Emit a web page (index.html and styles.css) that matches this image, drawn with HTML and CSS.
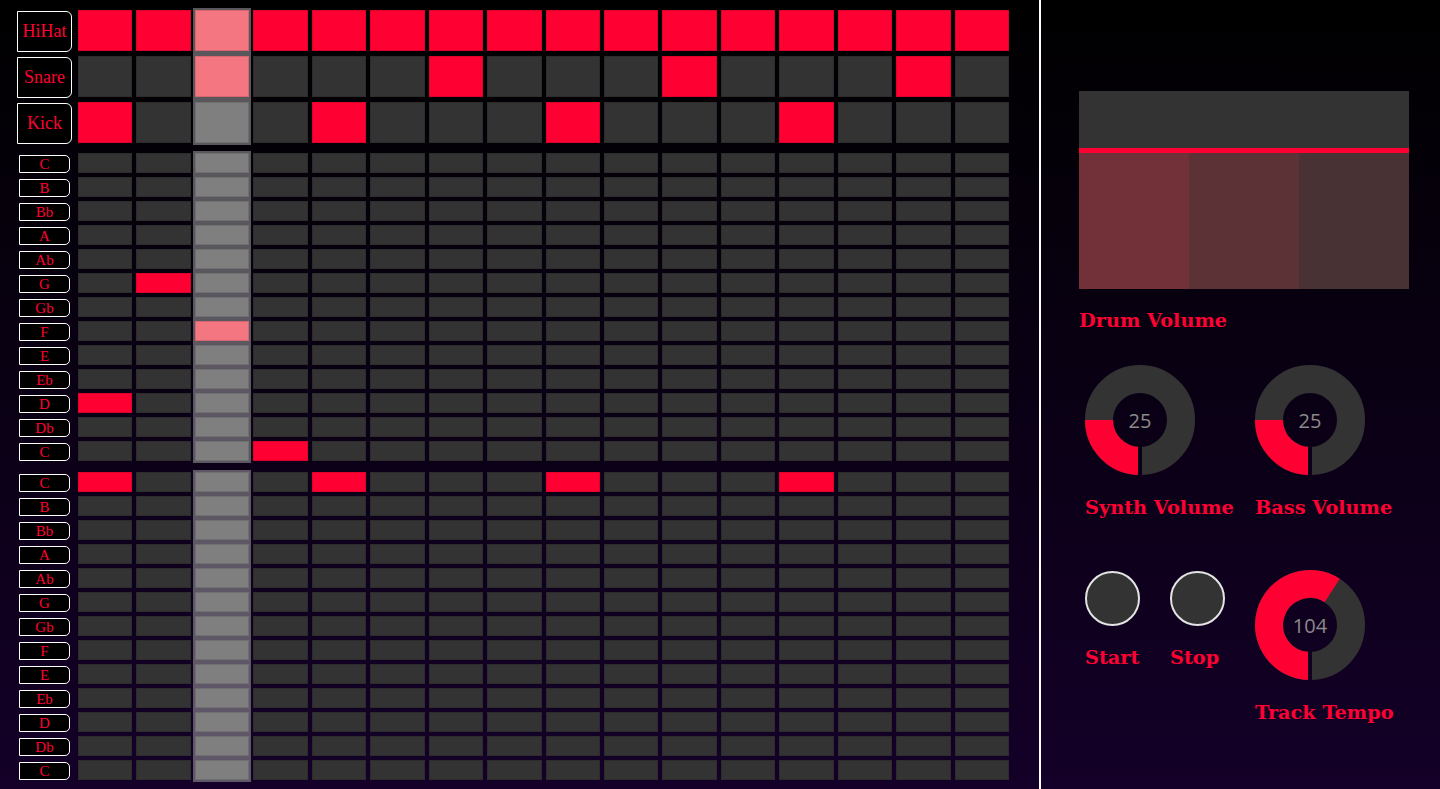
FILE: index.html
```html
<!DOCTYPE html>
<html lang="en">
<head>
<meta charset="utf-8">
<title>Step Sequencer</title>
<link rel="stylesheet" href="styles.css">
</head>
<body>
<div class="app">
  <main class="sequencer">
    <section class="section drums">
      <div class="labels" id="drum-labels"></div>
      <div class="steps" id="drum-steps"></div>
    </section>
    <section class="section notes">
      <div class="labels" id="synth-labels"></div>
      <div class="steps" id="synth-steps"></div>
    </section>
    <section class="section notes bass">
      <div class="labels" id="bass-labels"></div>
      <div class="steps" id="bass-steps"></div>
    </section>
  </main>
  <aside class="panel">
    <div class="fader">
      <div class="fader-top"></div>
      <div class="fader-line"></div>
      <div class="fader-bars">
        <div class="bar bar1"></div>
        <div class="bar bar2"></div>
        <div class="bar bar3"></div>
      </div>
    </div>
    <div class="title drum-title">Drum Volume</div>
    <div class="controls">
      <div class="control span2">
        <svg class="knob" viewBox="0 0 110 110" width="110" height="110">
          <defs>
            <mask id="gap1" maskUnits="userSpaceOnUse" x="0" y="0" width="110" height="110"><rect width="110" height="110" fill="#fff"/><rect x="53" y="55" width="4" height="55" fill="#000"/></mask>
          </defs>
          <g mask="url(#gap1)">
            <circle cx="55" cy="55" r="41" fill="none" stroke="#333333" stroke-width="28"/>
            <path d="M55 96 A41 41 0 0 1 14 55" fill="none" stroke="#ff0033" stroke-width="28"/>
          </g>
          <text x="55" y="55" class="knob-value">25</text>
        </svg>
        <div class="title knob-title">Synth Volume</div>
      </div>
      <div class="control">
        <svg class="knob" viewBox="0 0 110 110" width="110" height="110">
          <defs>
            <mask id="gap2" maskUnits="userSpaceOnUse" x="0" y="0" width="110" height="110"><rect width="110" height="110" fill="#fff"/><rect x="53" y="55" width="4" height="55" fill="#000"/></mask>
          </defs>
          <g mask="url(#gap2)">
            <circle cx="55" cy="55" r="41" fill="none" stroke="#333333" stroke-width="28"/>
            <path d="M55 96 A41 41 0 0 1 14 55" fill="none" stroke="#ff0033" stroke-width="28"/>
          </g>
          <text x="55" y="55" class="knob-value">25</text>
        </svg>
        <div class="title knob-title">Bass Volume</div>
      </div>
      <div class="control">
        <button class="btn" type="button" aria-label="Start"></button>
        <div class="title btn-title">Start</div>
      </div>
      <div class="control">
        <button class="btn" type="button" aria-label="Stop"></button>
        <div class="title btn-title">Stop</div>
      </div>
      <div class="control">
        <svg class="knob" viewBox="0 0 110 110" width="110" height="110">
          <defs>
            <mask id="gap3" maskUnits="userSpaceOnUse" x="0" y="0" width="110" height="110"><rect width="110" height="110" fill="#fff"/><rect x="53" y="55" width="4" height="55" fill="#000"/></mask>
          </defs>
          <g mask="url(#gap3)">
            <circle cx="55" cy="55" r="41" fill="none" stroke="#333333" stroke-width="28"/>
            <path d="M55 96 A41 41 0 1 1 77.2 20.5" fill="none" stroke="#ff0033" stroke-width="28"/>
          </g>
          <text x="55" y="55" class="knob-value">104</text>
        </svg>
        <div class="title knob-title">Track Tempo</div>
      </div>
    </div>
  </aside>
</div>
<script src="script.js"></script>
</body>
</html>
```

FILE: styles.css
```css
* { box-sizing: border-box; }

html, body {
  margin: 0;
  padding: 0;
  height: 100%;
}

body {
  background: linear-gradient(to bottom, #000000 0%, #0a0014 50%, #140028 100%);
  overflow: hidden;
  font-family: "Liberation Serif", "Times New Roman", serif;
}

.app {
  display: flex;
  height: 789px;
}

.sequencer {
  width: 1039px;
  flex: none;
  padding-top: 8px;
  display: flex;
  flex-direction: column;
  gap: 6px;
}

.section {
  display: flex;
}

.section.bass {
  margin-top: 1px;
}

.labels {
  width: 76px;
  flex: none;
  display: flex;
  flex-direction: column;
  padding: 2px 0;
}

.steps {
  width: 935px;
  display: grid;
  grid-template-columns: repeat(16, 1fr);
}

.col {
  display: flex;
  flex-direction: column;
  padding: 2px;
}

.col.playing {
  background: rgba(140, 136, 142, 0.64);
}

.cell {
  background: #333333;
  box-shadow: inset 0 0 0 1px rgba(0, 0, 0, 0.12);
}

.cell.on {
  background: #ff0033;
}

.col.playing .cell {
  background: #7f7f7f;
}

.col.playing .cell.on {
  background: #f47680;
}

/* drums */
.drums .labels { gap: 5px; }
.drums .col { gap: 5px; }
.drums .cell { height: 41px; }

.drum-label {
  margin-left: 17px;
  margin-top: 1px;
  margin-bottom: -1px;
  width: 55px;
  height: 41px;
  border: 1px solid #ffffff;
  border-radius: 0 6px 6px 0;
  background: #000;
  color: #ff0033;
  font-size: 18px;
  display: flex;
  align-items: center;
  justify-content: center;
}

/* notes */
.notes .labels { gap: 4px; }
.notes .col { gap: 4px; }
.notes .cell { height: 20px; }

.note-slot {
  height: 20px;
  display: flex;
  align-items: flex-end;
}

.note-label {
  margin-left: 19px;
  width: 51px;
  height: 18px;
  border: 1px solid #ffffff;
  border-radius: 0 5px 5px 0;
  background: #000;
  color: #ff0033;
  font-size: 15px;
  line-height: 16px;
  text-align: center;
}

/* right panel */
.panel {
  flex: 1;
  border-left: 2px solid #ffffff;
  padding-left: 38px;
  padding-top: 91px;
}

.fader {
  width: 330px;
  display: flex;
  flex-direction: column;
}

.fader-top {
  height: 57px;
  background: #333333;
}

.fader-line {
  height: 5px;
  background: #ff0033;
}

.fader-bars {
  height: 136px;
  display: flex;
}

.bar { flex: 1; }
.bar1 { background: #723038; }
.bar2 { background: #5d3236; }
.bar3 { background: #483234; }

.title {
  font-family: "DejaVu Serif", "Liberation Serif", serif;
  font-weight: bold;
  font-size: 19.3px;
  line-height: 22px;
  color: #ff0033;
  white-space: nowrap;
}

.drum-title {
  margin-top: 21px;
}

.controls {
  margin-top: 33px;
  margin-left: 6px;
  display: grid;
  grid-template-columns: 85px 85px 1fr;
  row-gap: 51px;
  align-items: start;
}

.control {
  display: flex;
  flex-direction: column;
  align-items: flex-start;
}

.span2 { grid-column: span 2; }

.knob {
  display: block;
}

.knob-value {
  font-family: "Open Sans", "Noto Sans", sans-serif;
  font-size: 20px;
  fill: #8a8a8a;
  text-anchor: middle;
  dominant-baseline: central;
}

.knob-title {
  margin-top: 22px;
}

.btn {
  display: block;
  width: 55px;
  height: 55px;
  margin: 1px 0 0 0;
  padding: 0;
  border: 2px solid #e4e4e4;
  border-radius: 50%;
  background: #333333;
}

.btn-title {
  margin-top: 21px;
}
```

FILE: script.js
```js
(function () {
  var STEPS = 16;
  var PLAYING = 3;

  var drums = [
    { name: 'HiHat', on: [1, 2, 3, 4, 5, 6, 7, 8, 9, 10, 11, 12, 13, 14, 15, 16] },
    { name: 'Snare', on: [3, 7, 11, 15] },
    { name: 'Kick', on: [1, 5, 9, 13] }
  ];

  var notes = ['C', 'B', 'Bb', 'A', 'Ab', 'G', 'Gb', 'F', 'E', 'Eb', 'D', 'Db', 'C'];
  var synthOn = { 5: [2], 7: [3], 10: [1], 12: [4] };
  var bassOn = { 0: [1, 5, 9, 13] };

  function buildSteps(container, rows) {
    for (var s = 1; s <= STEPS; s++) {
      var col = document.createElement('div');
      col.className = 'col' + (s === PLAYING ? ' playing' : '');
      for (var r = 0; r < rows.length; r++) {
        var cell = document.createElement('div');
        cell.className = 'cell' + (rows[r].indexOf(s) !== -1 ? ' on' : '');
        col.appendChild(cell);
      }
      container.appendChild(col);
    }
  }

  var drumLabels = document.getElementById('drum-labels');
  drums.forEach(function (d) {
    var l = document.createElement('div');
    l.className = 'drum-label';
    l.textContent = d.name;
    drumLabels.appendChild(l);
  });
  buildSteps(document.getElementById('drum-steps'), drums.map(function (d) { return d.on; }));

  function buildNotes(labelId, stepsId, onMap) {
    var labels = document.getElementById(labelId);
    var rows = [];
    notes.forEach(function (n, i) {
      var slot = document.createElement('div');
      slot.className = 'note-slot';
      var l = document.createElement('div');
      l.className = 'note-label';
      l.textContent = n;
      slot.appendChild(l);
      labels.appendChild(slot);
      rows.push(onMap[i] || []);
    });
    buildSteps(document.getElementById(stepsId), rows);
  }

  buildNotes('synth-labels', 'synth-steps', synthOn);
  buildNotes('bass-labels', 'bass-steps', bassOn);
})();
```
